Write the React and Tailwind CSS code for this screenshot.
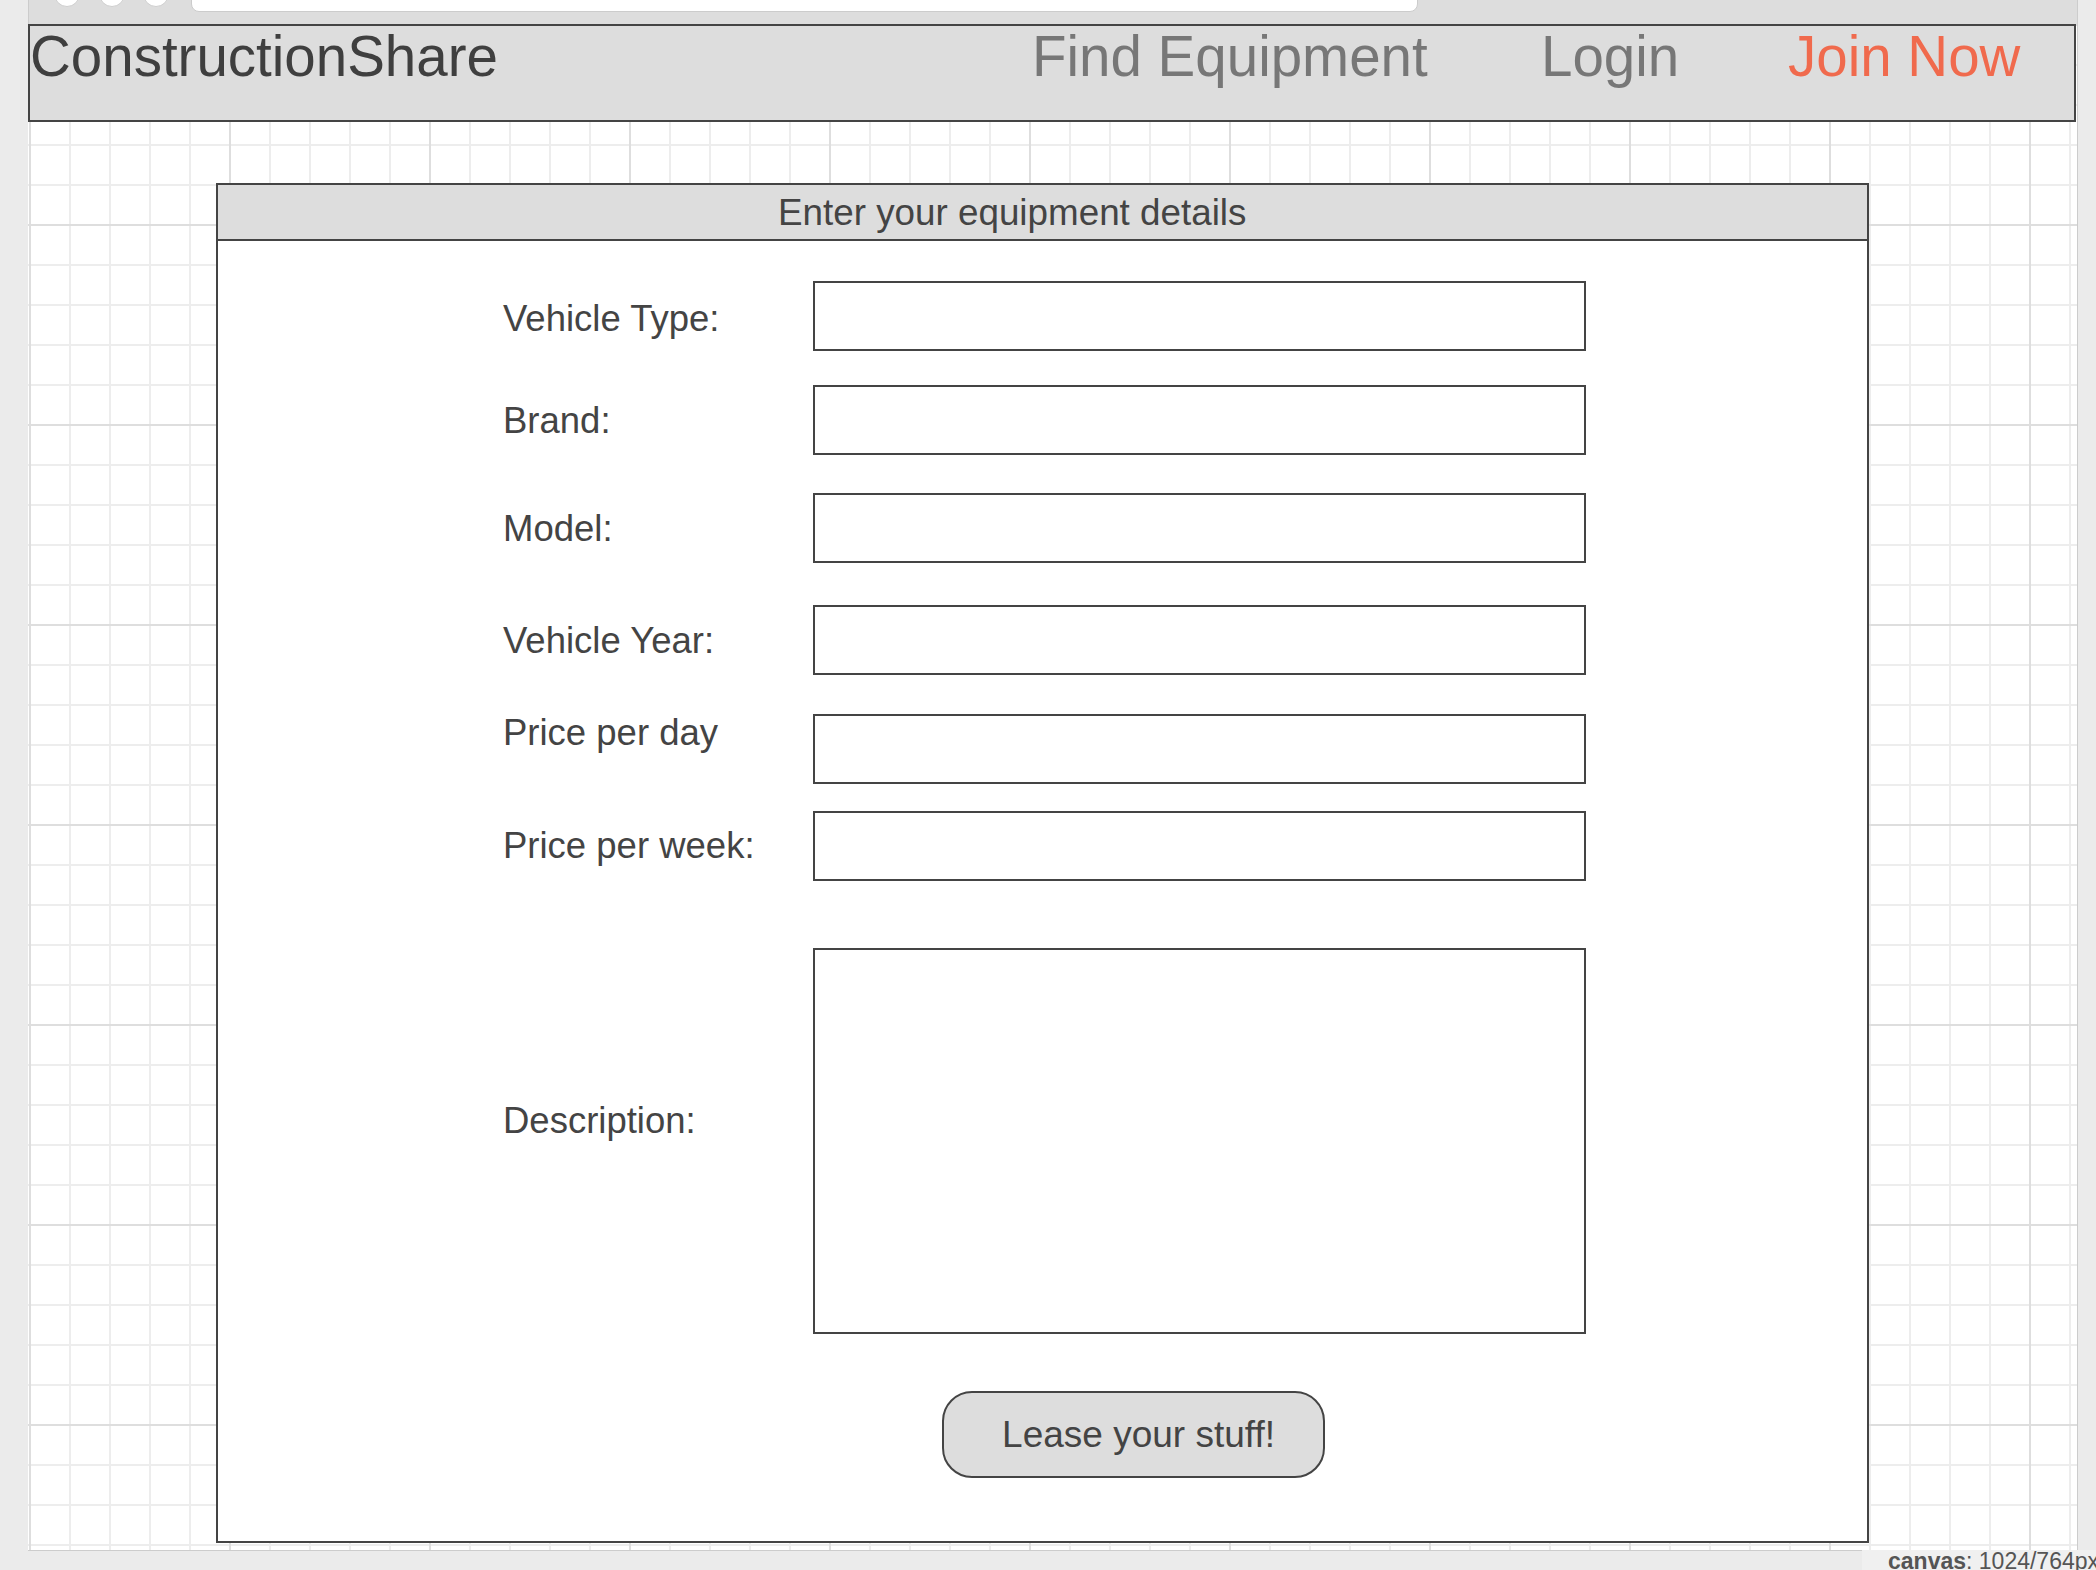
export default function App() {
  const rows = [
    { label: 'Vehicle Type:', row: 'mt-0', lab: 'mt-[18px]' },
    { label: 'Brand:', row: 'mt-[34px]', lab: 'mt-[16px]' },
    { label: 'Model:', row: 'mt-[38px]', lab: 'mt-[16px]' },
    { label: 'Vehicle Year:', row: 'mt-[42px]', lab: 'mt-[16px]' },
    { label: 'Price per day', row: 'mt-[39px]', lab: '-mt-[1px]' },
    { label: 'Price per week:', row: 'mt-[27px]', lab: 'mt-[15px]' },
  ];

  return (
    <div className="relative w-[2096px] h-[1570px] overflow-hidden bg-[#ebebeb] font-['Liberation_Sans',Arial,sans-serif] text-[#444444]">
      <div className="ml-[28px] w-[2050px] h-[1551px] border-r border-b border-[#cccccc] bg-white bg-[image:linear-gradient(to_right,#dedede_2px,transparent_2px),linear-gradient(to_bottom,#dedede_2px,transparent_2px),linear-gradient(to_right,#ededed_2px,transparent_2px),linear-gradient(to_bottom,#ededed_2px,transparent_2px)] bg-size-[200px_200px,200px_200px,40px_40px,40px_40px] bg-position-[1px_24px]">
        {/* browser chrome */}
        <div className="flex h-[24px] items-start overflow-hidden border-l border-[#cccccc] bg-[#dddddd]">
          <div className="ml-[25px] -mt-[19px] h-[26px] w-[26px] shrink-0 rounded-full border border-[#cfcfcf] bg-white" />
          <div className="ml-[19px] -mt-[19px] h-[26px] w-[26px] shrink-0 rounded-full border border-[#cfcfcf] bg-white" />
          <div className="ml-[18px] -mt-[19px] h-[26px] w-[26px] shrink-0 rounded-full border border-[#cfcfcf] bg-white" />
          <div className="ml-[22px] -mt-[8px] h-[20px] w-[1227px] shrink-0 rounded-b-[8px] border border-[#cccccc] bg-white" />
        </div>

        {/* header */}
        <header className="flex h-[98px] w-[2048px] items-start border-2 border-[#444444] bg-[#dddddd] pt-[3px] text-[56.5px] leading-[56px] whitespace-nowrap">
          <div className="w-[1002px] shrink-0 text-[#3f3f3f]">ConstructionShare</div>
          <div className="w-[509px] shrink-0 text-[#777777]">Find Equipment</div>
          <div className="w-[247px] shrink-0 text-[#777777]">Login</div>
          <div className="shrink-0 text-[#f06a4d]">Join Now</div>
        </header>

        {/* panel */}
        <section className="ml-[188px] mt-[61px] w-[1653px] border-2 border-[#444444] bg-white">
          <div className="h-[56px] border-b-2 border-[#444444] bg-[#dddddd] pl-[560px] pt-[1px] text-[36.8px] leading-[54px] whitespace-nowrap">
            Enter your equipment details
          </div>
          <div className="flex flex-col pl-[285px] pt-[40px] pb-[63px] text-[36.5px] leading-[40px]">
            {rows.map((r) => (
              <div key={r.label} className={`flex items-start ${r.row}`}>
                <label className={`w-[310px] shrink-0 whitespace-nowrap ${r.lab}`}>{r.label}</label>
                <input
                  type="text"
                  className="block h-[70px] w-[773px] border-2 border-[#444444] bg-white outline-none"
                />
              </div>
            ))}
            <div className="mt-[67px] flex items-start">
              <label className="mt-[153px] w-[310px] shrink-0 whitespace-nowrap">Description:</label>
              <textarea className="block h-[386px] w-[773px] resize-none border-2 border-[#444444] bg-white outline-none" />
            </div>
            <div className="mt-[57px] flex">
              <button
                type="button"
                className="ml-[439px] flex h-[87px] w-[383px] items-center justify-center rounded-[30px] border-2 border-[#444444] bg-[#dddddd] pl-[10px] text-[37px] leading-[40px] text-[#444444]"
              >
                Lease your stuff!
              </button>
            </div>
          </div>
        </section>
      </div>

      <div className="absolute left-[1862px] top-[1550px] h-[20px] w-[234px] overflow-hidden whitespace-nowrap bg-[#f0f0f0] pl-[26px] text-[23px] leading-[23px] text-[#555555]">
        <span className="font-bold">canvas</span>: 1024/764px
      </div>
    </div>
  );
}
